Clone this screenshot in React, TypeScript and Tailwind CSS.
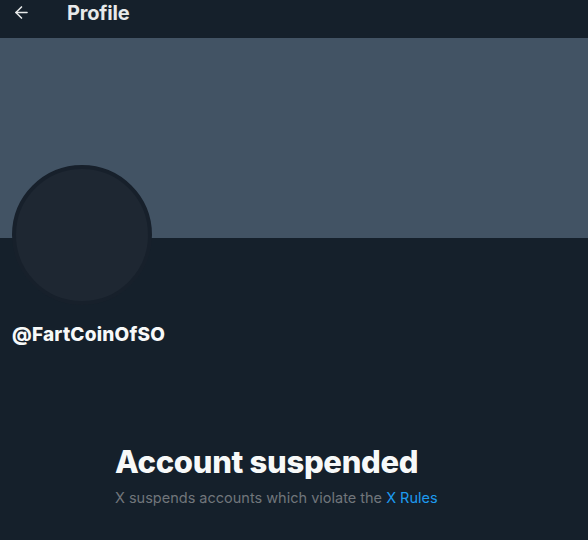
import { ArrowLeft } from "lucide-react";

export default function App() {
  return (
    <div className="w-[588px] h-[540px] overflow-hidden bg-[#15202b] font-['Inter','Liberation_Sans',sans-serif] text-white">
      {/* Header */}
      <div className="h-[38px] flex items-start pt-[3px]">
        <div className="w-[67px] pl-[12px]">
          <ArrowLeft className="w-[19px] h-[19px] text-[#e7e9ea]" strokeWidth={2} />
        </div>
        <h1 className="text-[20px] font-bold leading-[20px] text-[#e7e9ea] tracking-[-0.2px]">Profile</h1>
      </div>

      {/* Banner */}
      <div className="h-[200px] bg-[#425364]" />

      {/* Avatar + handle */}
      <div className="px-[12px]">
        <div className="-mt-[73px] w-[140px] h-[140px] rounded-full border-4 border-[#17202b] bg-[#1e2732]" />
        <div className="mt-[18px] text-[19px] font-extrabold leading-[24px] text-[#f7f9f9] tracking-[0.2px]">@FartCoinOfSO</div>
      </div>

      {/* Suspended message */}
      <div className="mt-[97px] pl-[115px]">
        <h2 className="text-[31px] font-extrabold leading-[36px] text-[#f7f9f9] tracking-[-0.3px]">Account suspended</h2>
        <p className="mt-[8px] text-[14.5px] leading-[20px] text-[#71767b]">
          X suspends accounts which violate the <span className="text-[#1d9bf0]">X Rules</span>
        </p>
      </div>
    </div>
  );
}
